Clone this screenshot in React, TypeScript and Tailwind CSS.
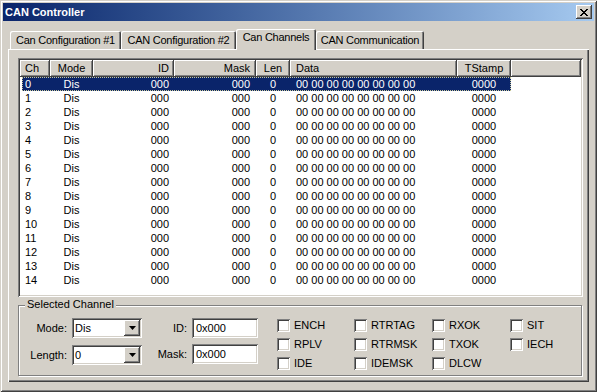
import React from 'react';

const raised = 'shadow-[inset_-1px_-1px_#404040,inset_1px_1px_#fff,inset_-2px_-2px_#808080]';
const sunken = 'shadow-[inset_1px_1px_#808080,inset_-1px_-1px_#fff,inset_2px_2px_#404040,inset_-2px_-2px_#d4d0c8]';

const channels = Array.from({ length: 15 }, (_, i) => i);

const Checkbox: React.FC<{ label: string }> = ({ label }) => (
  <div className="flex items-center h-[13px]">
    <div className={`w-[13px] h-[13px] bg-white shrink-0 ${sunken}`} />
    <span className="ml-[4px] leading-[13px]">{label}</span>
  </div>
);

const Combo: React.FC<{ value: string }> = ({ value }) => (
  <div className={`w-[70px] h-[20px] bg-white flex items-center p-[2px] ${sunken}`}>
    <span className="flex-1 pl-[1px] leading-[13px]">{value}</span>
    <div className={`w-[16px] h-[16px] bg-[#d4d0c8] flex items-center justify-center ${raised}`}>
      <svg width="7" height="4" viewBox="0 0 7 4">
        <polygon points="0,0 7,0 3.5,4" fill="#000" />
      </svg>
    </div>
  </div>
);

const Edit: React.FC<{ value: string }> = ({ value }) => (
  <div className={`w-[66px] h-[20px] bg-white flex items-center pl-[4px] ${sunken}`}>
    <span className="leading-[13px]">{value}</span>
  </div>
);

export default function App() {
  return (
    <div className="w-[597px] h-[392px] bg-[#d4d0c8] p-[3px] flex flex-col font-['Liberation_Sans',Arial,sans-serif] text-[11px] text-black select-none shadow-[inset_1px_1px_#d4d0c8,inset_-1px_-1px_#404040,inset_2px_2px_#fff,inset_-2px_-2px_#808080]">
      {/* Title bar */}
      <div className="h-[18px] flex items-center justify-between bg-linear-to-r from-[#0a246a] to-[#a6caf0] pl-[2px] pr-[2px]">
        <span className="text-white font-bold leading-[13px]">CAN Controller</span>
        <div className={`w-[16px] h-[14px] bg-[#d4d0c8] flex items-center justify-center ${raised}`}>
          <svg width="8" height="7" viewBox="0 0 8 7" shapeRendering="crispEdges">
            <path d="M0 0h2v1H0zM6 0h2v1H6zM1 1h2v1H1zM5 1h2v1H5zM2 2h4v1H2zM3 3h2v1H3zM2 4h4v1H2zM1 5h2v1H1zM5 5h2v1H5zM0 6h2v1H0zM6 6h2v1H6z" fill="#000" />
          </svg>
        </div>
      </div>

      <div className="mt-[8px] mx-[5px] flex flex-col">
        {/* Tabs */}
        <div className="h-[20px] flex items-end pl-[2px] tracking-[-0.25px]">
          <div className="w-[111px] h-[18px] pt-[3px] text-center leading-[13px] rounded-t-[2px] shadow-[inset_1px_1px_#fff,inset_-1px_0_#404040,inset_-2px_0_#808080]">
            Can Configuration #1
          </div>
          <div className="w-[115px] h-[18px] pt-[3px] text-center leading-[13px] rounded-t-[2px] shadow-[inset_1px_1px_#fff,inset_-1px_0_#404040,inset_-2px_0_#808080]">
            CAN Configuration #2
          </div>
          <div className="relative z-10 w-[80px] h-[21px] -mb-[1px] pt-[2px] text-center leading-[13px] bg-[#d4d0c8] rounded-t-[2px] shadow-[inset_1px_1px_#fff,inset_-1px_0_#404040,inset_-2px_0_#808080]">
            Can Channels
          </div>
          <div className="w-[108px] h-[18px] pt-[3px] text-center leading-[13px] rounded-t-[2px] shadow-[inset_1px_1px_#fff,inset_-1px_0_#404040,inset_-2px_0_#808080]">
            CAN Communication
          </div>
        </div>

        {/* Tab panel */}
        <div className="h-[333px] pl-[10px] pt-[9px] pr-[6px] flex flex-col shadow-[inset_1px_1px_#fff,inset_-1px_-1px_#404040,inset_-2px_-2px_#808080]">
          {/* List view */}
          <div className={`h-[239px] bg-white p-[2px] flex flex-col ${sunken}`}>
            <div className="h-[17px] flex bg-[#d4d0c8] shrink-0">
              <div className={`w-[30px] pl-[5px] flex items-center leading-[13px] ${raised}`}>Ch</div>
              <div className={`w-[43px] justify-center flex items-center leading-[13px] ${raised}`}>Mode</div>
              <div className={`w-[81px] justify-end pr-[5px] flex items-center leading-[13px] ${raised}`}>ID</div>
              <div className={`w-[82px] justify-end pr-[6px] flex items-center leading-[13px] ${raised}`}>Mask</div>
              <div className={`w-[34px] justify-center flex items-center leading-[13px] ${raised}`}>Len</div>
              <div className={`w-[167px] pl-[6px] flex items-center leading-[13px] ${raised}`}>Data</div>
              <div className={`w-[54px] justify-center flex items-center leading-[13px] ${raised}`}>TStamp</div>
              <div className={`flex-1 ${raised}`} />
            </div>
            {channels.map((ch) => (
              <div
                key={ch}
                className={
                  ch === 0
                    ? 'ml-[2px] w-[489px] h-[14px] flex bg-[#0a246a] text-white outline-1 outline-dotted outline-[#c8c89a] -outline-offset-1'
                    : 'ml-[2px] w-[489px] h-[14px] flex'
                }
              >
                <div className="w-[28px] pl-[3px] pt-[1px] leading-[13px]">{ch}</div>
                <div className="w-[43px] text-center pt-[1px] leading-[13px]">Dis</div>
                <div className="w-[81px] text-right pr-[5px] pt-[1px] leading-[13px]">000</div>
                <div className="w-[82px] text-right pr-[6px] pt-[1px] leading-[13px]">000</div>
                <div className="w-[34px] text-center pt-[1px] leading-[13px]">0</div>
                <div className="w-[167px] pl-[6px] pt-[1px] leading-[13px] whitespace-nowrap">00 00 00 00 00 00 00 00</div>
                <div className="w-[54px] text-center pt-[1px] leading-[13px]">0000</div>
              </div>
            ))}
          </div>

          {/* Selected Channel group */}
          <div className="relative mt-[8px] h-[71px] w-[564px] border border-[#808080] shadow-[inset_1px_1px_#fff,1px_1px_#fff] pt-[12px] flex">
            <span className="absolute left-[6px] -top-[8px] px-[2px] bg-[#d4d0c8] leading-[13px]">Selected Channel</span>

            <div className="w-[48px] flex flex-col gap-[7px] text-right">
              <div className="h-[20px] flex items-center justify-end leading-[13px]">Mode:</div>
              <div className="h-[20px] flex items-center justify-end leading-[13px]">Length:</div>
            </div>
            <div className="ml-[5px] flex flex-col gap-[7px]">
              <Combo value="Dis" />
              <Combo value="0" />
            </div>

            <div className="w-[45px] flex flex-col gap-[6px]">
              <div className="h-[20px] flex items-center justify-end leading-[13px]">ID:</div>
              <div className="h-[20px] flex items-center justify-end leading-[13px]">Mask:</div>
            </div>
            <div className="ml-[5px] flex flex-col gap-[6px]">
              <Edit value="0x000" />
              <Edit value="0x000" />
            </div>

            <div className="ml-[19px] mt-[1px] w-[77px] flex flex-col gap-[6px]">
              <Checkbox label="ENCH" />
              <Checkbox label="RPLV" />
              <Checkbox label="IDE" />
            </div>
            <div className="mt-[1px] w-[78px] flex flex-col gap-[6px]">
              <Checkbox label="RTRTAG" />
              <Checkbox label="RTRMSK" />
              <Checkbox label="IDEMSK" />
            </div>
            <div className="mt-[1px] w-[78px] flex flex-col gap-[6px]">
              <Checkbox label="RXOK" />
              <Checkbox label="TXOK" />
              <Checkbox label="DLCW" />
            </div>
            <div className="mt-[1px] flex flex-col gap-[6px]">
              <Checkbox label="SIT" />
              <Checkbox label="IECH" />
            </div>
          </div>
        </div>
      </div>
    </div>
  );
}
